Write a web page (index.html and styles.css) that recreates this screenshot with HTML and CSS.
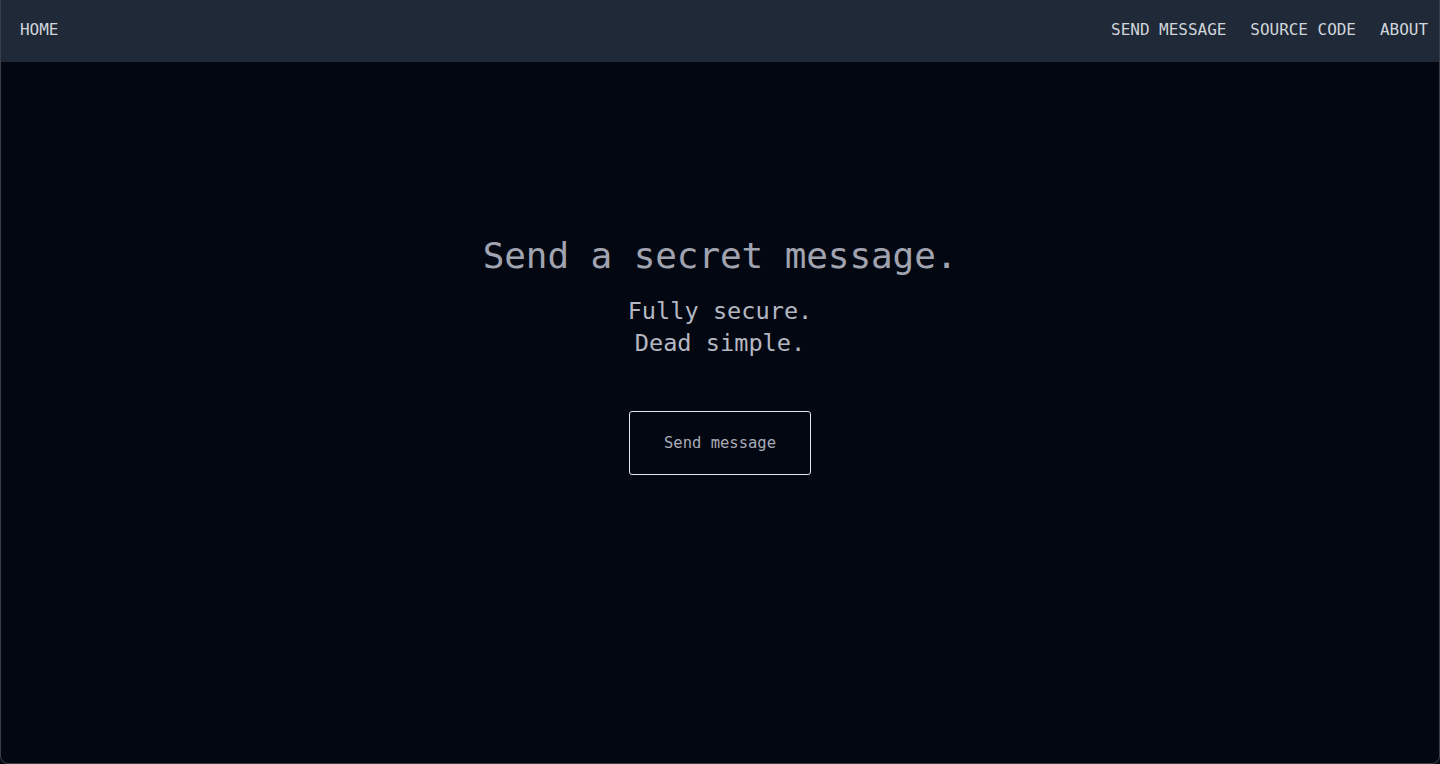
FILE: index.html
```html
<!DOCTYPE html>
<html lang="en">
<head>
<meta charset="utf-8">
<title>Send a secret message</title>
<link rel="stylesheet" href="styles.css">
</head>
<body>
<div class="frame">
  <header class="topbar">
    <a class="nav-link" href="#">HOME</a>
    <nav class="nav-right">
      <a class="nav-link" href="#">SEND MESSAGE</a>
      <a class="nav-link" href="#">SOURCE CODE</a>
      <a class="nav-link" href="#">ABOUT</a>
    </nav>
  </header>
  <main class="hero">
    <h1 class="hero-title">Send a secret message.</h1>
    <p class="hero-sub">Fully secure.<br>Dead simple.</p>
    <a class="hero-btn" href="#">Send message</a>
  </main>
</div>
</body>
</html>
```

FILE: styles.css
```css
* { box-sizing: border-box; }
html, body { margin: 0; padding: 0; height: 100%; background: #030712; }
body {
  font-family: "DejaVu Sans Mono", "Liberation Mono", monospace;
}
.frame {
  height: 764px;
  display: flex;
  flex-direction: column;
  border: 1px solid #3a3f47;
  border-top: none;
  border-radius: 0 0 8px 8px;
  overflow: hidden;
  background: #030712;
}
.topbar {
  height: 62px;
  flex: none;
  background: #1f2937;
  display: flex;
  align-items: center;
  justify-content: space-between;
  padding: 0 11px 2px 19px;
}
.nav-right { display: flex; gap: 24px; }
.nav-link {
  color: #d1d5db;
  text-decoration: none;
  font-size: 16px;
  line-height: 24px;
  letter-spacing: -0.03px;
}
.hero {
  flex: 1;
  display: flex;
  flex-direction: column;
  align-items: center;
  padding-top: 174px;
}
.hero-title {
  margin: 0;
  font-size: 36px;
  line-height: 40px;
  font-weight: 400;
  color: #a1a4b0;
  letter-spacing: -0.1px;
}
.hero-sub {
  margin: 19px 0 0;
  font-size: 23.6px;
  line-height: 32px;
  text-align: center;
  color: #b4b7c1;
}
.hero-btn {
  margin-top: 52px;
  display: block;
  width: 182px;
  height: 64px;
  border: 1px solid #e5e7eb;
  border-radius: 3px;
  color: #a9acb7;
  text-decoration: none;
  font-size: 15.5px;
  line-height: 62px;
  text-align: center;
}
```
